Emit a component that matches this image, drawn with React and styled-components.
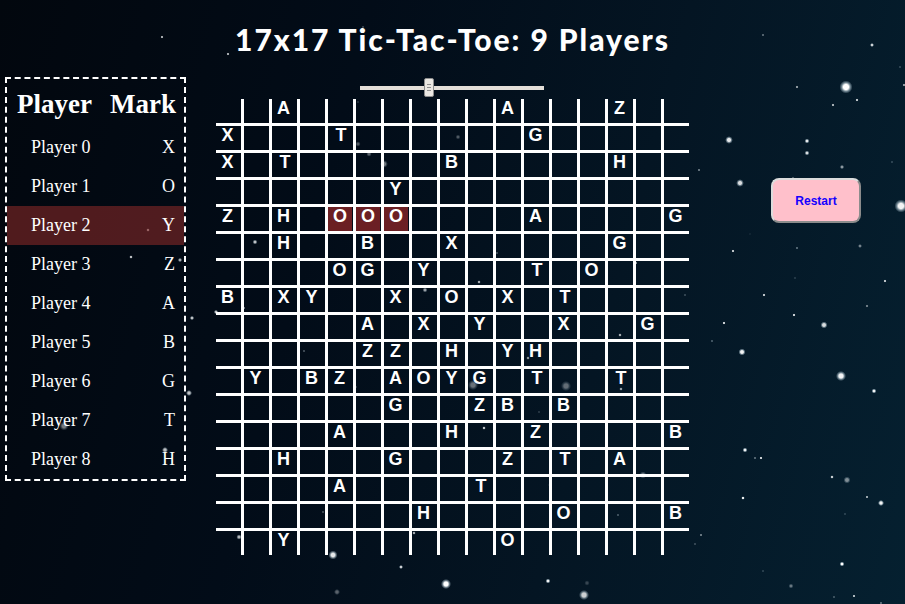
import React from "react";
import styled, { createGlobalStyle } from "styled-components";

const players = ["X", "O", "Y", "Z", "A", "B", "G", "T", "H"];

// one string per row, "." is an empty cell
const board = [
    "..A.......A...Z..",
    "X...T......G.....",
    "X.T.....B.....H..",
    "......Y..........",
    "Z.H.OOO....A....G",
    "..H..B..X.....G..",
    "....OG.Y...T.O...",
    "B.XY..X.O.X.T....",
    ".....A.X.Y..X..G.",
    ".....ZZ.H.YH.....",
    ".Y.BZ.AOYG.T..T..",
    "......G..ZB.B....",
    "....A...H..Z....B",
    "..H...G...Z.T.A..",
    "....A....T.......",
    ".......H....O...B",
    "..Y.......O......",
];

const winning = ["4-4", "4-5", "4-6"];

// x, y, radius, brightness
const stars = [
    [162, 37, 1.6, 0.7], [228, 54, 1.6, 0.7], [363, 27, 1, 0.5], [763, 35, 1.2, 0.5],
    [872, 45, 2, 0.8], [900, 67, 1, 0.4], [846, 87, 6.5, 1], [904, 85, 1.6, 0.6],
    [797, 87, 1.6, 0.6], [857, 100, 1.6, 0.8], [833, 105, 1.6, 0.7], [729, 140, 3.8, 0.9],
    [807, 141, 2.4, 0.9], [807, 153, 2.4, 0.85], [842, 167, 2.2, 0.55], [892, 162, 1, 0.4],
    [699, 170, 1.2, 0.6], [740, 183, 3.8, 0.85], [793, 178, 1.6, 0.3], [901, 206, 6.5, 0.95],
    [750, 234, 0.8, 0.3], [733, 251, 1.6, 0.8], [797, 248, 1.1, 0.6], [860, 246, 2, 0.45],
    [885, 281, 1.6, 0.8], [795, 278, 1, 0.3], [764, 295, 1.6, 0.8], [867, 306, 1.6, 0.45],
    [794, 315, 1.6, 0.85], [824, 325, 3.5, 0.85], [724, 323, 1.6, 0.85], [712, 341, 1, 0.6],
    [742, 352, 3.5, 0.95], [841, 376, 5, 0.95], [874, 391, 2.4, 0.95], [745, 450, 2.4, 0.95],
    [755, 458, 1.2, 0.5], [761, 458, 1.6, 0.85], [832, 477, 1.7, 0.8], [847, 480, 3.5, 0.5],
    [743, 498, 1.7, 0.95], [867, 497, 1.5, 0.7], [881, 503, 3, 0.95], [845, 514, 1, 0.35],
    [701, 535, 1.3, 0.55], [695, 544, 1.2, 0.3], [842, 564, 2.4, 1], [763, 571, 1, 0.35],
    [791, 586, 2.4, 0.4], [834, 597, 1.2, 0.35], [854, 596, 1.4, 0.85], [881, 603, 1.2, 0.5],
    [333, 555, 4.5, 0.9], [401, 567, 2, 0.8], [446, 584, 5, 1], [337, 592, 3, 0.35],
    [548, 581, 2.4, 0.95], [587, 583, 2.6, 0.2], [584, 595, 5, 0.8], [239, 537, 2.6, 0.7],
    [323, 512, 1.2, 0.35], [131, 257, 1.7, 0.75], [180, 260, 2.2, 0.65], [216, 312, 2.2, 0.75],
    [244, 308, 1.2, 0.65], [192, 318, 2.2, 0.75], [304, 351, 1.1, 0.45], [189, 393, 3, 0.75],
    [64, 426, 4.5, 0.45], [148, 230, 1.7, 0.55], [255, 242, 2.4, 0.75], [165, 450, 3, 0.75],
    [358, 102, 1, 0.3], [358, 144, 2.6, 0.3], [369, 154, 2.6, 0.35], [384, 164, 3.8, 0.45],
    [458, 137, 2.4, 0.3], [497, 253, 1.2, 0.35], [479, 282, 1.7, 0.65], [425, 290, 2.4, 0.6],
    [636, 263, 1.4, 0.65], [685, 295, 1.1, 0.35], [620, 335, 1.7, 0.65], [528, 358, 1.7, 0.55],
    [473, 385, 5, 0.4], [566, 386, 5, 0.38], [621, 389, 1.7, 0.6], [484, 428, 1.7, 0.75],
    [539, 412, 1.1, 0.25], [643, 475, 3.5, 0.42], [550, 485, 1.8, 0.28], [618, 515, 1.1, 0.45],
    [414, 533, 1.7, 0.65], [355, 352, 1.1, 0.3], [356, 387, 1.1, 0.3],
];

const starLayers = stars
    .map(
        ([x, y, r, a]) =>
            `radial-gradient(circle ${r}px at ${x}px ${y}px, rgba(255,255,255,${a}) 40%, rgba(215,235,245,${a * 0.5}) 68%, transparent 100%)`
    )
    .join(",");

const GlobalStyle = createGlobalStyle`
    html, body {
        margin: 0;
        height: 100%;
        overflow: hidden;
    }
    body {
        background-color: #02080f;
        background-image: ${starLayers}, linear-gradient(105deg, #02070e 0%, #020c18 35%, #041523 65%, #052030 100%);
        background-repeat: no-repeat;
    }
`;

const Page = styled.div`
    display: flex;
    flex-direction: column;
    height: 604px;
`;

const Title = styled.h1`
    margin: 0;
    height: 77px;
    display: flex;
    align-items: center;
    justify-content: center;
    color: #fff;
    font-family: "Comic Sans MS", "Lato", sans-serif;
    font-size: 30px;
    font-weight: 900;
    letter-spacing: 1.95px;
`;

const Main = styled.div`
    display: flex;
    align-items: flex-start;
    padding-left: 5px;
`;

const Scoreboard = styled.div`
    box-sizing: border-box;
    width: 181px;
    height: 404px;
    border: 2px dashed #fff;
    color: #fff;
    font-family: "Liberation Serif", serif;
    font-size: 18px;
`;

const HeadRow = styled.div`
    box-sizing: border-box;
    display: flex;
    justify-content: space-between;
    align-items: center;
    height: 49px;
    padding: 2px 8px 0 10px;
    font-size: 27px;
    font-weight: 700;
`;

const PlayerRow = styled.div`
    display: flex;
    justify-content: space-between;
    align-items: center;
    height: 39px;
    padding: 0 9px 0 24px;
    background: ${(p) => (p.$active ? "rgba(172, 50, 45, 0.46)" : "transparent")};
`;

const GameColumn = styled.div`
    display: flex;
    flex-direction: column;
    align-items: center;
    margin-left: 30px;
    width: 473px;
`;

const SliderTrack = styled.div`
    position: relative;
    width: 184px;
    height: 4px;
    margin: 9px 1px 9px 0;
    background: #e4dfd9;
`;

const SliderThumb = styled.div`
    position: absolute;
    top: -8px;
    box-sizing: border-box;
    width: 10px;
    height: 19px;
    border: 1px solid #8d8d8d;
    border-radius: 2px;
    background: #ebe8e3;
    display: flex;
    flex-direction: column;
    align-items: center;
    justify-content: center;
    gap: 2px;
`;

const Grip = styled.span`
    width: 4px;
    height: 1px;
    background: #8f8f8f;
`;

const Board = styled.div`
    display: grid;
    grid-template-columns: repeat(16, 28px) 25px;
    grid-template-rows: repeat(16, 27px) 24px;
`;

const Cell = styled.div`
    box-sizing: border-box;
    border-right: ${(p) => (p.$lastCol ? "0" : "3px solid #fff")};
    border-bottom: ${(p) => (p.$lastRow ? "0" : "3px solid #fff")};
    padding-right: ${(p) => (p.$won ? "1px" : "0")};
    background: ${(p) => (p.$won ? "rgba(165, 42, 42, 0.65)" : "transparent")};
    background-clip: content-box;
    color: #fff;
    font-family: "Liberation Sans", Arial, sans-serif;
    font-size: 18px;
    font-weight: 700;
    line-height: 18px;
    text-align: center;
    text-indent: ${(p) => (p.$won ? "0" : p.$mark === "T" ? "1px" : "-2px")};
`;

const SideColumn = styled.div`
    display: flex;
    margin: 101px 0 0 82px;
`;

const RestartButton = styled.button`
    box-sizing: border-box;
    width: 90px;
    height: 45px;
    border: 2px solid;
    border-color: #dcdcdc #8c8c8c #8c8c8c #dcdcdc;
    border-radius: 8px;
    background: #ffc0cb;
    color: #1500ff;
    font-family: "Liberation Sans", Arial, sans-serif;
    font-size: 12px;
    font-weight: 700;
`;

export default function App() {
    return (
        <Page>
            <GlobalStyle />
            <Title>17x17 Tic-Tac-Toe: 9 Players</Title>
            <Main>
                <Scoreboard>
                    <HeadRow>
                        <span>Player</span>
                        <span>Mark</span>
                    </HeadRow>
                    {players.map((mark, i) => (
                        <PlayerRow key={mark} $active={i === 2}>
                            <span>Player {i}</span>
                            <span>{mark}</span>
                        </PlayerRow>
                    ))}
                </Scoreboard>
                <GameColumn>
                    <SliderTrack>
                        <SliderThumb style={{ left: 64 }}>
                            <Grip />
                            <Grip />
                            <Grip />
                        </SliderThumb>
                    </SliderTrack>
                    <Board>
                        {board.map((row, r) =>
                            row.split("").map((ch, c) => (
                                <Cell
                                    key={`${r}-${c}`}
                                    $lastCol={c === 16}
                                    $lastRow={r === 16}
                                    $mark={ch}
                                    $won={winning.includes(`${r}-${c}`)}
                                >
                                    {ch === "." ? "" : ch}
                                </Cell>
                            ))
                        )}
                    </Board>
                </GameColumn>
                <SideColumn>
                    <RestartButton>Restart</RestartButton>
                </SideColumn>
            </Main>
        </Page>
    );
}
